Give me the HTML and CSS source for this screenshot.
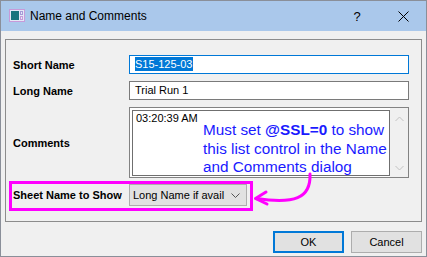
FILE: index.html
```html
<!DOCTYPE html>
<html lang="en">
<head>
    <meta charset="UTF-8">
    <meta name="viewport" content="width=device-width, initial-scale=1.0">
    <title>Name and Comments</title>
    <link rel="stylesheet" href="styles.css">
</head>
<body>
    <div class="window">
        <div class="titlebar">
            <svg class="app-icon" width="16" height="14" viewBox="0 0 16 14">
                <rect x="0.5" y="0.5" width="15" height="12" fill="#e4e8f6" stroke="#c79ad9"/>
                <rect x="2" y="2" width="8" height="9" fill="#17747c"/>
                <rect x="11.5" y="2.5" width="2" height="3" fill="none" stroke="#a79ad8"/>
                <rect x="11.5" y="7.5" width="2" height="3" fill="none" stroke="#c79ad9"/>
            </svg>
            <span class="title">Name and Comments</span>
            <span class="help">?</span>
            <span class="close">
                <svg width="11" height="11" viewBox="0 0 11 11">
                    <path d="M0.5 0.5 L10.5 10.5 M10.5 0.5 L0.5 10.5" stroke="#000" stroke-width="1"/>
                </svg>
            </span>
        </div>

        <div class="content">
            <div class="group">
                <div class="row">
                    <label class="field-label">Short Name</label>
                    <div class="textbox focused"><span class="selected">S15-125-03</span></div>
                </div>
                <div class="row">
                    <label class="field-label">Long Name</label>
                    <div class="textbox">Trial Run 1</div>
                </div>
                <div class="row row-comments">
                    <label class="field-label">Comments</label>
                    <div class="listbox">
                        <div class="list-text">03:20:39 AM</div>
                        <div class="scrollbar">
                            <svg width="9" height="6" viewBox="0 0 9 6"><path d="M0.5 5 L4.5 1 L8.5 5" fill="none" stroke="#c2c2c2"/></svg>
                            <svg width="9" height="6" viewBox="0 0 9 6"><path d="M0.5 1 L4.5 5 L8.5 1" fill="none" stroke="#c2c2c2"/></svg>
                        </div>
                    </div>
                </div>
                <div class="row row-sheet">
                    <label class="field-label">Sheet Name to Show</label>
                    <div class="dropdown">
                        <span>Long Name if avail</span>
                        <svg width="9" height="5" viewBox="0 0 9 5"><path d="M0.5 0.5 L4.5 4.5 L8.5 0.5" fill="none" stroke="#555"/></svg>
                    </div>
                </div>
            </div>

            <div class="buttons">
                <button class="btn btn-default">OK</button>
                <button class="btn">Cancel</button>
            </div>
        </div>

        <!-- annotation drawn over the dialog -->
        <div class="note">Must set <b>@SSL=0</b> to show<br>this list control in the Name<br>and Comments dialog</div>
        <svg class="arrow" width="427" height="257" viewBox="0 0 427 257">
            <path d="M310 174 C 311 199, 294 204, 256 198.5" fill="none" stroke="#ff00ff" stroke-width="3" stroke-linecap="round"/>
            <path d="M266 192 L255.5 198.5 L267 204" fill="none" stroke="#ff00ff" stroke-width="3" stroke-linecap="round" stroke-linejoin="round"/>
        </svg>
    </div>
</body>
</html>
```

FILE: styles.css
```css
body {
    margin: 0;
    font-family: "Liberation Sans", Arial, sans-serif;
    font-size: 11px;
    color: #000;
    background-color: #f0f0f0;
}
.window {
    position: relative;
    width: 427px;
    height: 257px;
    box-sizing: border-box;
    border: 1px solid #8a8f99;
    background-color: #f0f0f0;
}
.titlebar {
    display: flex;
    align-items: center;
    height: 30px;
    padding-left: 8px;
    background-color: #aac8eb;
}
.app-icon {
    margin-right: 5px;
    margin-top: -1px;
}
.title {
    font-size: 12px;
    flex: 1;
}
.help,
.close {
    width: 46px;
    text-align: center;
}
.help {
    font-size: 13px;
}
.close svg {
    display: block;
    margin: 0 auto;
}
.content {
    padding: 8px 4px 0 4px;
}
.group {
    border: 1px solid #8c8c8c;
    padding: 15px 0 10px 0;
}
.row {
    display: flex;
    align-items: center;
    margin-left: 7px;
    margin-bottom: 7px;
}
.field-label {
    width: 116px;
    font-weight: bold;
}
.textbox {
    width: 280px;
    height: 19px;
    box-sizing: border-box;
    border: 1px solid #7a7a7a;
    background-color: white;
    padding-left: 5px;
    line-height: 17px;
}
.textbox.focused {
    border-color: #0078d7;
}
.selected {
    background-color: #0078d7;
    color: white;
    padding: 1px 0;
}
.row-comments {
    margin-bottom: 3px;
}
.listbox {
    display: flex;
    width: 280px;
    height: 71px;
    box-sizing: border-box;
    border: 1px solid #828282;
    background-color: white;
    padding: 2px 0 1px 2px;
}
.list-text {
    flex: 1;
    border: 1px solid #6f6f6f;
    padding: 1px 3px;
    line-height: 13px;
}
.scrollbar {
    width: 18px;
    margin: -2px 0 -1px 0;
    background-color: #f0f0f0;
    display: flex;
    flex-direction: column;
    justify-content: space-between;
    align-items: center;
    padding: 8px 0 6px 0;
}
.scrollbar svg {
    display: block;
}
.row-sheet {
    margin: 0 0 0 3px;
    width: max-content;
    border: 3px solid #ff00ff;
    padding: 0 3px 0 1px;
    height: 24px;
    align-items: flex-start;
}
.row-sheet .field-label {
    line-height: 22px;
}
.dropdown {
    display: flex;
    align-items: center;
    justify-content: space-between;
    width: 118px;
    height: 22px;
    box-sizing: border-box;
    border: 1px solid #adadad;
    background-color: #e1e1e1;
    padding: 0 6px 0 3px;
}
.buttons {
    display: flex;
    justify-content: flex-end;
    gap: 7px;
    margin-top: 9px;
}
.btn {
    width: 71px;
    height: 22px;
    font-family: "Liberation Sans", Arial, sans-serif;
    font-size: 11px;
    color: #000;
    background-color: #e1e1e1;
    border: 1px solid #adadad;
    padding: 0;
}
.btn-default {
    border: 2px solid #0078d7;
}
.note {
    position: absolute;
    left: 202px;
    top: 120px;
    color: #1a1aff;
    font-size: 15.3px;
    line-height: 18.5px;
    white-space: nowrap;
}
.arrow {
    position: absolute;
    left: -1px;
    top: -1px;
    pointer-events: none;
}
```
